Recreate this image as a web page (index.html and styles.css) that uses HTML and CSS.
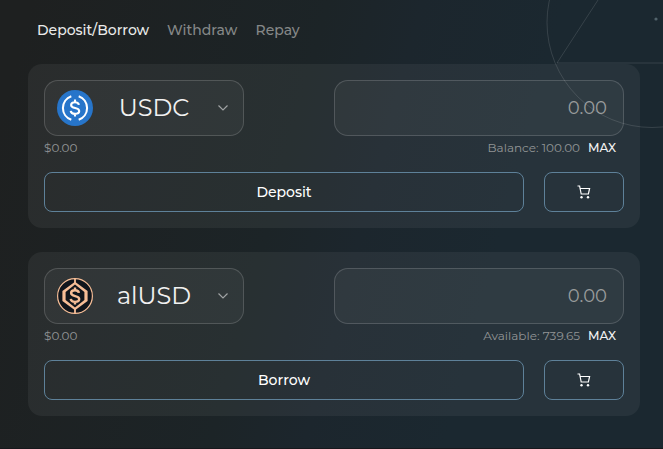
FILE: index.html
```html
<!DOCTYPE html>
<html lang="en">
<head>
<meta charset="utf-8">
<title>Vault</title>
<link rel="stylesheet" href="styles.css">
</head>
<body>
<svg class="orbit" width="663" height="449" viewBox="0 0 663 449" fill="none" stroke="currentColor" aria-hidden="true">
  <circle cx="652" cy="22.5" r="105"/>
  <path d="M598 0 557 63h106"/>
  <circle cx="656" cy="19" r="1.6" fill="#52636b" stroke="none"/>
</svg>
<main class="vault">
  <nav class="tabs">
    <a class="tab tab-active">Deposit/Borrow</a>
    <a class="tab tab-withdraw">Withdraw</a>
    <a class="tab tab-repay">Repay</a>
  </nav>

  <section class="card">
    <div class="row">
      <div class="select">
        <svg class="coin" viewBox="0 0 36 36" fill="none" stroke="#fff" stroke-width="2.1">
          <circle cx="18" cy="18" r="18" fill="#2775ca" stroke="none"/>
          <path d="M14.300 6.200a12.500 12.500 0 0 0 0 23.600M21.700 6.200a12.500 12.500 0 0 1 0 23.600"/>
          <path d="M21.900 14.900c-.3-1.900-1.800-2.700-3.900-2.700-2.300 0-3.900 1.100-3.900 2.800 0 4.300 8.100 1.800 8.100 6.100 0 1.800-1.600 2.800-4.200 2.800-2.500 0-4-1-4.300-3M18 9.400v2.800M18 23.900v2.700"/>
        </svg>
        <span class="symbol symbol-usdc">USDC</span>
        <svg class="chevron" viewBox="0 0 12 8"><path d="m1.500 1.500 4.500 4.500 4.500-4.500"/></svg>
      </div>
      <div class="amount">0.00</div>
    </div>
    <div class="info"><span class="fiat">$0.00</span><span class="limit balance">Balance: 100.00</span><b class="max">MAX</b></div>
    <div class="actions">
      <button class="button submit deposit"><span>Deposit</span></button>
      <button class="button buy" aria-label="Buy"><svg class="cart" viewBox="0 0 14 14"><path d="M.5 1h2.100l1.600 8h7.200l1.200-5.500H3.200"/><circle cx="4.500" cy="12.200" r="1.200"/><circle cx="11" cy="12.200" r="1.200"/></svg></button>
    </div>
  </section>

  <section class="card">
    <div class="row">
      <div class="select">
        <svg class="coin" viewBox="0 0 36 36" fill="none" stroke="#f6bd96">
          <circle cx="18" cy="18" r="17.400" fill="#10151c" stroke-width="1.200"/>
          <path d="M18 0v5M18 31v5" stroke-width="1.800"/>
          <path d="M18 3.800 30.600 13v10L18 32.200 5.400 23V13ZM18 6.400 8.600 14v8L18 29.600 27.400 22v-8Z" fill="#f6bd96" fill-rule="evenodd" stroke="none"/>
          <path d="M21.900 14.900c-.3-1.900-1.800-2.700-3.900-2.700-2.300 0-3.900 1.100-3.900 2.800 0 4.300 8.100 1.800 8.100 6.100 0 1.800-1.600 2.800-4.200 2.800-2.500 0-4-1-4.300-3M18 9.400v2.800M18 23.900v2.700" stroke-width="2.400"/>
        </svg>
        <span class="symbol symbol-alusd">alUSD</span>
        <svg class="chevron" viewBox="0 0 12 8"><path d="m1.500 1.500 4.500 4.500 4.500-4.500"/></svg>
      </div>
      <div class="amount">0.00</div>
    </div>
    <div class="info"><span class="fiat">$0.00</span><span class="limit available">Available: 739.65</span><b class="max">MAX</b></div>
    <div class="actions">
      <button class="button submit borrow"><span>Borrow</span></button>
      <button class="button buy" aria-label="Buy"><svg class="cart" viewBox="0 0 14 14"><path d="M.5 1h2.100l1.600 8h7.200l1.200-5.500H3.200"/><circle cx="4.500" cy="12.200" r="1.200"/><circle cx="11" cy="12.200" r="1.200"/></svg></button>
    </div>
  </section>
</main>
</body>
</html>
```
FILE: styles.css
```css
* { box-sizing: border-box; }

body {
  margin: 0;
  height: 449px;
  overflow: hidden;
  border-bottom: 1px solid #17181c;
  background: linear-gradient(105deg, #1e2020 4%, #1c2427 42%, #1c262d 54%, #1b2830 72%, #1b2830 100%);
  color: #f1f1f1;
  font-family: Montserrat, Inter, sans-serif;
  white-space: nowrap;
}

.orbit { position: absolute; top: 0; left: 0; color: rgba(255, 255, 255, .12); }

.vault { width: 612px; margin-left: 28px; }

.tabs { display: flex; height: 64px; padding: 20px 0 0 9px; font-size: 14px; line-height: 20px; font-weight: 500; color: #858888; }
.tab { flex: none; }
.tab-active { width: 130px; color: #e9eaea; }
.tab-withdraw { width: 88.5px; }

.card { height: 164px; margin-bottom: 24px; padding: 16px; border-radius: 14px; background: rgba(255, 255, 255, .055); }
.row { display: flex; justify-content: space-between; height: 56px; }
.select, .amount { border: 1px solid rgba(255, 255, 255, .16); border-radius: 14px; background: rgba(255, 255, 255, .04); }
.select { display: flex; align-items: center; justify-content: space-between; width: 200px; padding: 0 14px 0 12px; }
.coin { width: 36px; height: 36px; }
.symbol { padding-right: 2px; font-size: 24px; line-height: 32px; }
.chevron { width: 12px; height: 8px; fill: none; stroke: #a0a3a4; stroke-width: 1.2; }
.amount { width: 290px; padding-right: 16px; font-size: 18px; line-height: 54px; text-align: right; color: #999b9c; }

.info { display: flex; height: 24px; padding-right: 8px; font-size: 12px; line-height: 24px; color: #929596; }
.limit { margin-left: auto; }
.max { margin-left: 8px; font-weight: 500; color: #f4f4f4; }

.actions { display: flex; justify-content: space-between; height: 40px; margin-top: 12px; }
.button { display: flex; align-items: center; justify-content: center; padding: 0; border: 1px solid #5e8199; border-radius: 8px; background: transparent; color: #fff; font: 500 14px/20px Montserrat, Inter, sans-serif; }
.submit { width: 480px; }
.buy { width: 80px; }
.cart { width: 14px; height: 14px; fill: none; stroke: #fff; stroke-width: 1.200; }
.cart circle { fill: #fff; stroke: none; }
```
